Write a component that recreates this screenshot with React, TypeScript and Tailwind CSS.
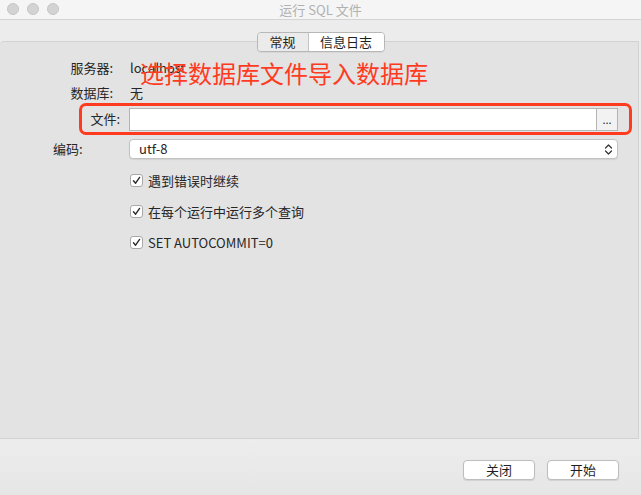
const font = { fontFamily: '"Noto Sans CJK SC", "Liberation Sans", sans-serif' }

function Check({ label }: { label: string }) {
  return (
    <div className="flex items-center h-[16px] ml-[130px]">
      <div className="w-[13px] h-[13px] bg-white border border-[#a8a8a8] rounded-[3px] flex items-center justify-center">
        <svg width="9" height="9" viewBox="0 0 9 9">
          <path d="M1.5 4.8 L3.6 7.2 L7.6 1.4" fill="none" stroke="#2b2b2b" strokeWidth="1.4" strokeLinecap="round" strokeLinejoin="round" />
        </svg>
      </div>
      <span className="ml-[5px] text-[13px] text-[#262626] leading-none">{label}</span>
    </div>
  )
}

export default function App() {
  return (
    <div className="relative w-[641px] h-[495px] bg-[#ececec] flex flex-col overflow-hidden" style={font}>
      {/* Title bar */}
      <div className="relative h-[20px] bg-[#f5f5f5] border-b border-[#d4d4d4] flex items-center justify-center">
        <div className="absolute left-[7px] top-[3px] flex gap-[8px]">
          {[0, 1, 2].map(i => (
            <div key={i} className="w-[12px] h-[12px] rounded-full bg-[#d3d3d3] border border-[#c6c6c6]" />
          ))}
        </div>
        <span className="text-[13px] text-[#b1b1b1] leading-none">运行 SQL 文件</span>
      </div>

      {/* Tabs */}
      <div className="relative z-10 flex justify-center pt-[12px] -mb-[11px]">
        <div className="flex h-[20px] border border-[#b7b7b7] rounded-[4px] overflow-hidden shadow-[0_1px_0_rgba(0,0,0,0.05)] text-[13px] text-[#1f1f1f]">
          <div className="w-[51px] bg-[#ebebeb] border-r border-[#c4c4c4] flex items-center justify-center">常规</div>
          <div className="w-[75px] bg-white flex items-center justify-center">信息日志</div>
        </div>
      </div>

      {/* Panel */}
      <div className="h-[398px] w-[639px] bg-[#e3e3e3] border-t border-r border-b border-[#d2d2d2] rounded-tl-[4px] flex flex-col text-[13px] text-[#262626]">
        <div className="flex items-center h-[16px] mt-[18px]">
          <span className="w-[113px] text-right">服务器:</span>
          <span className="ml-[17px]">localhost</span>
        </div>
        <div className="flex items-center h-[16px] mt-[9px]">
          <span className="w-[113px] text-right">数据库:</span>
          <span className="ml-[17px]">无</span>
        </div>
        <div className="mt-[2px] ml-[79px] w-[553px] h-[32px] border-[3px] border-[#ff3b1f] rounded-[7px] flex items-center">
          <span className="w-[38px] text-right">文件:</span>
          <div className="ml-[9px] w-[468px] h-[23px] bg-white border border-[#b4b4b4]" />
          <div className="w-[21px] h-[23px] bg-[#f2f2f2] border border-l-0 border-[#b4b4b4] flex items-end justify-center pb-[5px] text-[11px] leading-none">...</div>
        </div>
        <div className="flex items-center mt-[4px]">
          <span className="ml-[53px] w-[76px]">编码:</span>
          <div className="w-[489px] h-[20px] bg-white border border-[#c2c2c2] rounded-[4px] shadow-[0_1px_1px_rgba(0,0,0,0.08)] flex items-center justify-between pl-[9px] pr-[4px]">
            <span>utf-8</span>
            <svg width="9" height="13" viewBox="0 0 9 13">
              <path d="M1.5 5 L4.5 2 L7.5 5 M1.5 8 L4.5 11 L7.5 8" fill="none" stroke="#333" strokeWidth="1.2" strokeLinecap="round" strokeLinejoin="round" />
            </svg>
          </div>
        </div>
        <div className="flex flex-col gap-[15px] mt-[13px]">
          <Check label="遇到错误时继续" />
          <Check label="在每个运行中运行多个查询" />
          <Check label="SET AUTOCOMMIT=0" />
        </div>
      </div>

      {/* Bottom buttons */}
      <div className="flex-1 bg-gradient-to-b from-[#ededed] to-[#e6e6e6] flex justify-end items-start pt-[21px] pr-[22px] gap-[12px] text-[13px] text-[#1f1f1f]">
        <div className="w-[72px] h-[20px] bg-white border border-[#bdbdbd] rounded-[4px] shadow-[0_1px_1px_rgba(0,0,0,0.1)] flex items-center justify-center">关闭</div>
        <div className="w-[72px] h-[20px] bg-white border border-[#bdbdbd] rounded-[4px] shadow-[0_1px_1px_rgba(0,0,0,0.1)] flex items-center justify-center">开始</div>
      </div>

      {/* Red annotation overlay */}
      <div className="absolute left-[140px] top-[61px] text-[24px] leading-none text-[#ff3b1f]">选择数据库文件导入数据库</div>
    </div>
  )
}
